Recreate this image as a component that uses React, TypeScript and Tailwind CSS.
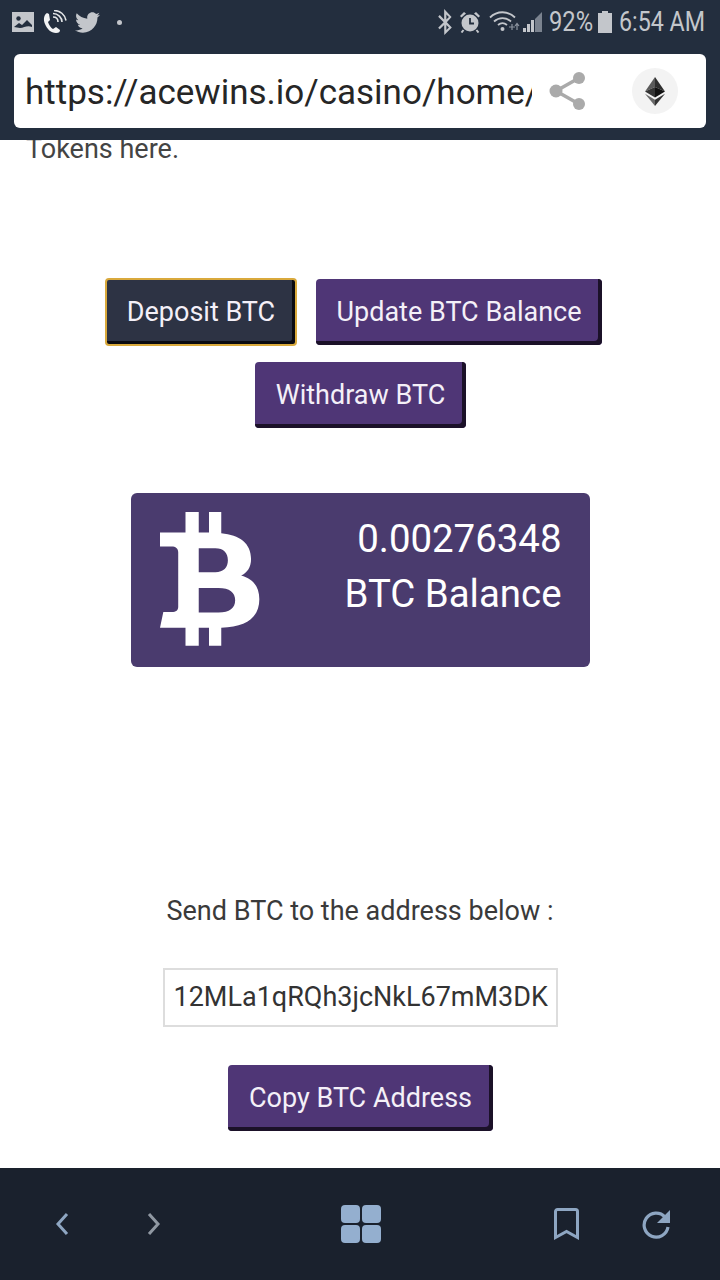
import React from 'react';
import { FaTwitter, FaBluetoothB } from 'react-icons/fa';

const btn = 'flex h-[66px] items-center justify-center rounded-[4px] text-[27px] text-[#f4f0f8]';
const purple = 'bg-[#4f3676] shadow-[inset_-4px_-4px_0_#1b1128]';

const StatusLeft = () => (
  <div className="flex items-center">
    <svg width="22" height="20" viewBox="0 0 22 20" className="ml-[12px]">
      <rect width="22" height="20" fill="#c3c6cb" />
      <circle cx="6.500" cy="6.500" r="2.200" fill="#232e3e" />
      <path fill="#232e3e" d="M2 15l5-4 3 2 5-5 5 5v2c-5-2-8 1-12 1-2 0-4-1-6-1z" />
    </svg>
    <svg width="26" height="24" viewBox="0 0 26 24" className="ml-[8px]">
      <path
        fill="#f2f3f4"
        d="M5 3c-3 2-4 6-2 11s6 9 11 9c3 0 4-1 4-3l-4-3-3 2c-2-1-4-4-5-7l2-2-1-6z"
      />
      <g fill="none" stroke="#e4e6e8" strokeWidth="1.600">
        <path d="M11 7c3 0 5 2 5 5" />
        <path d="M11 3.500c5 0 9 4 9 8.500" />
        <path d="M12 0.500c6 0 11 4 12 10" />
      </g>
    </svg>
    <FaTwitter className="ml-[7px] text-[25px] text-[#c3c6cb]" />
    <span className="ml-[17px] h-[5px] w-[5px] rounded-full bg-[#c3c6cb]" />
  </div>
);

const StatusRight = () => (
  <div className="flex items-center">
    <FaBluetoothB className="text-[26px] text-[#c3c6cb]" />
    <svg width="22" height="22" viewBox="0 0 22 22" className="ml-[1px]">
      <circle cx="11" cy="12" r="8.500" fill="#c3c6cb" />
      <path d="M11 7v5.500h4" fill="none" stroke="#232e3e" strokeWidth="1.800" />
      <path d="M1 5l4-4 2 1.500-4.500 4zM21 5l-4-4-2 1.500 4.500 4z" fill="#c3c6cb" />
      <path d="M4.500 19l-2 2.500M17.500 19l2 2.500" stroke="#c3c6cb" strokeWidth="2" />
    </svg>
    <svg width="54" height="24" viewBox="0 0 54 24" className="ml-[8px]">
      <g fill="none" stroke="#c3c6cb" strokeWidth="1.800">
        <path d="M1 7.500c7-7 18-7 25 0" />
        <path d="M5 11.500c5-4.500 12-4.500 17 0" />
        <path d="M9 15c3-2.500 6-2.500 9 0" />
      </g>
      <circle cx="13.500" cy="19" r="2" fill="#c3c6cb" />
      <path d="M20 17h6M23 14v6M28 20v-6M26 16l2-2.500 2 2.500" fill="none" stroke="#8c94a0" strokeWidth="1.200" />
      <path d="M34 22h3v-4h-3zM38 22h3v-8h-3zM42 22h3v-12h-3z" fill="#c3c6cb" />
      <path d="M46 22h7V2l-7 7z" fill="#7b838f" />
    </svg>
    <span className="ml-[6px] inline-block w-[47px] origin-left scale-x-[0.88] text-[27px] leading-none text-[#c3c6cb]">
      92%
    </span>
    <svg width="14" height="22" viewBox="0 0 14 22" className="ml-[2px]">
      <path d="M4 0h6v2h4v20H0V2h4z" fill="#c3c6cb" />
    </svg>
    <span className="ml-[7px] inline-block w-[86px] whitespace-nowrap origin-left scale-x-[0.86] text-[27px] leading-none text-[#c3c6cb]">
      6:54 AM
    </span>
  </div>
);

const ShareIcon = () => (
  <svg width="38" height="40" viewBox="0 0 38 40">
    <path d="M30 7L7 20l23 13" fill="none" stroke="#aaaaaa" strokeWidth="3.500" />
    <circle cx="30" cy="7" r="6" fill="#aaaaaa" />
    <circle cx="7" cy="20" r="6.500" fill="#aaaaaa" />
    <circle cx="30" cy="33" r="6" fill="#aaaaaa" />
  </svg>
);

const EthBadge = () => (
  <div className="flex h-[46px] w-[46px] items-center justify-center rounded-full bg-[#f3f3f3]">
    <svg width="20" height="31" viewBox="0 0 22 32">
      <path d="M11 0L0 16l11-5z" fill="#5a5a5a" />
      <path d="M11 0l11 16-11-5z" fill="#2e2e2e" />
      <path d="M0 16l11 6.500V11z" fill="#333333" />
      <path d="M22 16l-11 6.500V11z" fill="#111111" />
      <path d="M0 18.500L11 32V25z" fill="#6a6a6a" />
      <path d="M22 18.500L11 32V25z" fill="#333333" />
    </svg>
  </div>
);

const BitcoinMark = () => (
  <svg width="100" height="136" viewBox="120 78 302 405">
    <path
      fill="#ffffff"
      fillRule="evenodd"
      d="M197 78h40v62h31V78h37v64c55 5 90 30 90 78 0 25-12 42-30 50 35 10 55 32 55 72 0 55-40 84-115 86v54h-37v-54h-31v54h-40v-54H120l10-48h25c14 0 20-6 20-16V200c0-12-8-18-20-18h-55v-42h97zM237 188v72h50c25 0 38-14 38-36s-13-36-38-36zM237 308v74h60c33 0 50-14 50-37s-17-37-50-37z"
    />
  </svg>
);

const BottomNav = () => (
  <div className="flex h-[112px] items-center bg-[#1a212d] pl-[55px]">
    <svg width="14" height="24" viewBox="0 0 14 24">
      <path d="M12 2L3 12l9 10" fill="none" stroke="#8ea6c2" strokeWidth="3" />
    </svg>
    <svg width="14" height="24" viewBox="0 0 14 24" className="ml-[78px]">
      <path d="M2 2l9 10-9 10" fill="none" stroke="#9098a2" strokeWidth="3" />
    </svg>
    <div className="ml-[180px] grid grid-cols-2 gap-[2px]">
      <span className="h-[18px] w-[19px] rounded-[4px] bg-[#94afcf]" />
      <span className="h-[18px] w-[19px] rounded-[4px] bg-[#94afcf]" />
      <span className="h-[18px] w-[19px] rounded-[4px] bg-[#94afcf]" />
      <span className="h-[18px] w-[19px] rounded-[4px] bg-[#94afcf]" />
    </div>
    <svg width="27" height="32" viewBox="0 0 27 32" className="ml-[172px]">
      <path d="M2.500 29.500V3.500a2 2 0 0 1 2-2h18a2 2 0 0 1 2 2v26l-11-6z" fill="none" stroke="#8ea6c2" strokeWidth="3" />
    </svg>
    <svg width="30" height="30" viewBox="0 0 30 30" className="ml-[61px]">
      <path d="M24 8a12 12 0 1 0 3 10" fill="none" stroke="#8ea6c2" strokeWidth="3.200" />
      <path d="M29 1v13H16z" fill="#8ea6c2" />
    </svg>
  </div>
);

export default function App() {
  return (
    <div className="flex h-[1280px] w-[720px] flex-col overflow-hidden bg-white font-['Roboto',sans-serif]">
      <header className="z-10 h-[140px] shrink-0 bg-[#232e3e]">
        <div className="flex h-[54px] items-center justify-between pb-[10px] pr-[15px]">
          <StatusLeft />
          <StatusRight />
        </div>
        <div className="mx-[14px] flex h-[74px] items-center rounded-[6px] bg-white pl-[11px]">
          <div className="w-[507px] overflow-hidden whitespace-nowrap pt-[4px] text-[35px] leading-[44px] text-[#262626]">
            https://acewins.io/casino/home/
          </div>
          <div className="ml-[17px]">
            <ShareIcon />
          </div>
          <div className="ml-[45px]">
            <EthBadge />
          </div>
        </div>
      </header>

      <main className="flex min-h-0 flex-1 flex-col items-center">
        <p className="-mt-[6px] self-start pl-[26px] text-[27px] leading-[30px] text-[#444444]">Tokens here.</p>

        <div className="mt-[114px] mr-[13px] flex items-center gap-[19px]">
          <button className={`${btn} h-[68px] w-[192px] border-2 border-[#d9a93c] bg-[#2d3344] shadow-[inset_-3px_-3px_0_#0a0a10]`}>
            Deposit BTC
          </button>
          <button className={`${btn} ${purple} w-[286px]`}>Update BTC Balance</button>
        </div>
        <button className={`${btn} ${purple} mt-[16px] ml-[1px] w-[211px]`}>Withdraw BTC</button>

        <section className="mt-[65px] flex h-[174px] w-[459px] rounded-[6px] bg-[#4a3b6e] pl-[29px] pr-[28px] pt-[18px]">
          <BitcoinMark />
          <div className="flex-1 text-right text-[38.400px] leading-[55px] text-white">
            <div>0.00276348</div>
            <div>BTC Balance</div>
          </div>
        </section>

        <p className="mt-[229px] text-[27px] leading-[30px] text-[#3a3a3a]">Send BTC to the address below :</p>

        <div className="mt-[42px] flex h-[59px] w-[395px] items-center overflow-hidden whitespace-nowrap border-2 border-[#dddddd] pl-[9px] text-[27px] text-[#333333]">
          12MLa1qRQh3jcNkL67mM3DK
        </div>

        <button className={`${btn} ${purple} mt-[38px] ml-[1px] w-[265px]`}>Copy BTC Address</button>
      </main>

      <BottomNav />
    </div>
  );
}
